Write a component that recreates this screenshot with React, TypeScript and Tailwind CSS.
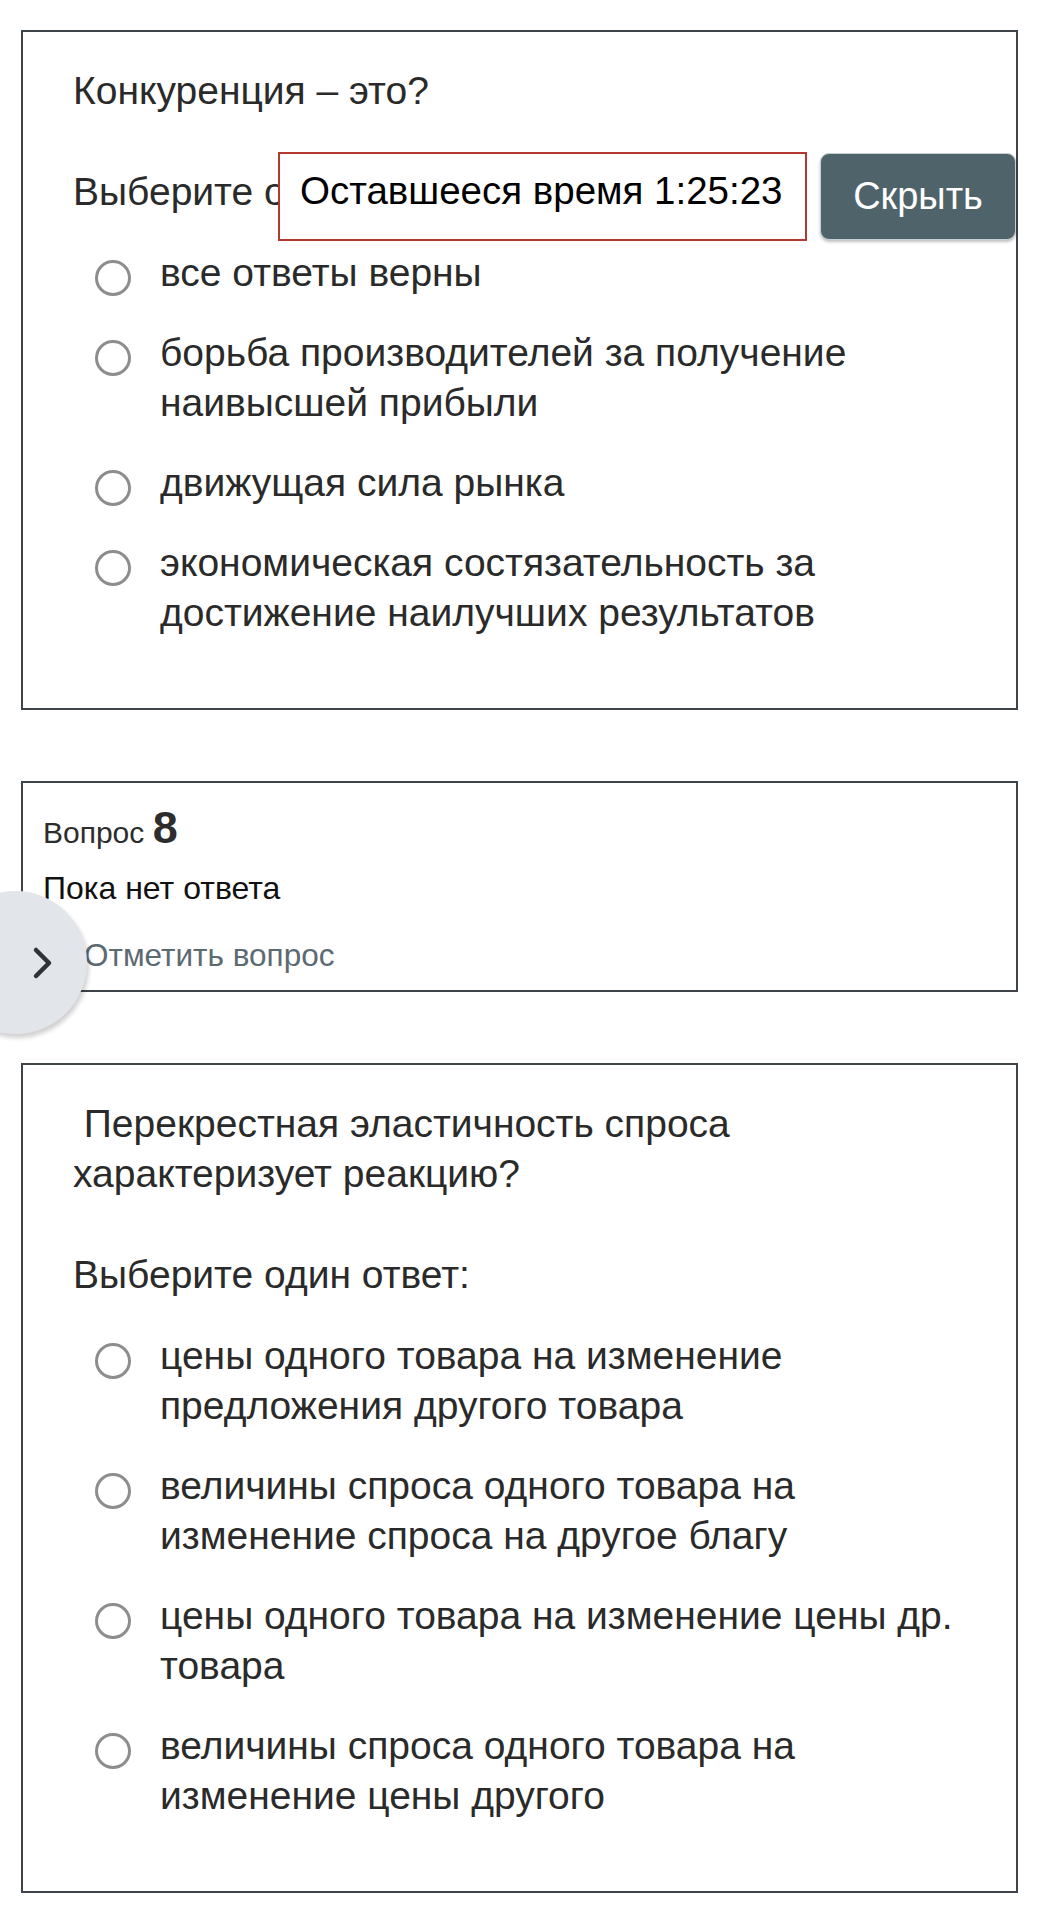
import React from "react";

const FONT = { fontFamily: '"Liberation Sans", Arial, sans-serif' };

function Radio() {
  return (
    <span className="mt-[12px] block h-[36px] w-[36px] shrink-0 rounded-full border-[3px] border-[#8d8d8d] bg-white" />
  );
}

function Option({ text }: { text: string }) {
  return (
    <div className="flex items-start pl-[22px]">
      <Radio />
      <div className="pl-[29px] pr-[24px]">{text}</div>
    </div>
  );
}

function QuestionCard({ lines, options }: { lines: string[]; options: string[] }) {
  return (
    <div className="border-2 border-[#3e4449] bg-white pb-[70px] pl-[50px] pr-[20px] pt-[34px] text-[39px] leading-[50px] text-[#2a2a2a]">
      <div className="mb-[51px]">
        {lines.map((l, i) => (
          <div key={i} className="whitespace-pre">{l}</div>
        ))}
      </div>
      <div className="mb-[31px]">Выберите один ответ:</div>
      <div className="flex flex-col gap-[30px]">
        {options.map((o) => (
          <Option key={o} text={o} />
        ))}
      </div>
    </div>
  );
}

export default function App() {
  return (
    <div className="relative min-h-[1920px] w-[1040px] overflow-hidden bg-white" style={FONT}>
      <div className="flex flex-col gap-[71px] pl-[21px] pr-[22px] pt-[30px]">
        <QuestionCard
          lines={["Конкуренция – это?"]}
          options={[
            "все ответы верны",
            "борьба производителей за получение наивысшей прибыли",
            "движущая сила рынка",
            "экономическая состязательность за достижение наилучших результатов",
          ]}
        />

        <div className="border-2 border-[#3e4449] bg-white pb-[17px] pl-[20px] pt-[27px] leading-[36px]">
          <div className="text-[30px] text-[#2d2d2d]">
            Вопрос <span className="text-[45px] font-bold">8</span>
          </div>
          <div className="mt-[19px] text-[32px] text-[#111]">Пока нет ответа</div>
          <div className="mt-[31px] flex items-center gap-[8px] text-[31.5px] text-[#5c6a72]">
            <span className="w-[33px]" />
            <span>Отметить вопрос</span>
          </div>
        </div>

        <QuestionCard
          lines={[" Перекрестная эластичность спроса", "характеризует реакцию?"]}
          options={[
            "цены одного товара на изменение предложения другого товара",
            "величины спроса одного товара на изменение спроса на другое благу",
            "цены одного товара на изменение цены др. товара",
            "величины спроса одного товара на изменение цены другого",
          ]}
        />
      </div>

      {/* timer overlay */}
      <div className="absolute left-[278px] top-[152px] flex items-start gap-[13px]">
        <div className="h-[89px] w-[529px] border-2 border-[#b4382d] bg-white pl-[20px] pt-[12px] text-[38.5px] leading-[50px] text-black">
          Оставшееся время 1:25:23
        </div>
        <button className="mt-[1px] flex h-[87px] w-[196px] items-center justify-center rounded-[9px] border border-[#c9d0d3] bg-[#4f636b] text-[38px] text-white shadow-[0_2px_3px_rgba(0,0,0,0.25)]">
          Скрыть
        </button>
      </div>

      {/* drawer toggle */}
      <button className="absolute left-[-56px] top-[891px] flex h-[143px] w-[143px] items-center justify-end rounded-full bg-[#e2e5e9] pr-[33px] shadow-[2px_4px_4px_rgba(0,0,0,0.18)]">
        <svg width="22" height="34" viewBox="0 0 22 34" fill="none">
          <path d="M4 4 L17 17 L4 30" stroke="#2f3336" strokeWidth="4.5" strokeLinecap="round" strokeLinejoin="round" />
        </svg>
      </button>
    </div>
  );
}
